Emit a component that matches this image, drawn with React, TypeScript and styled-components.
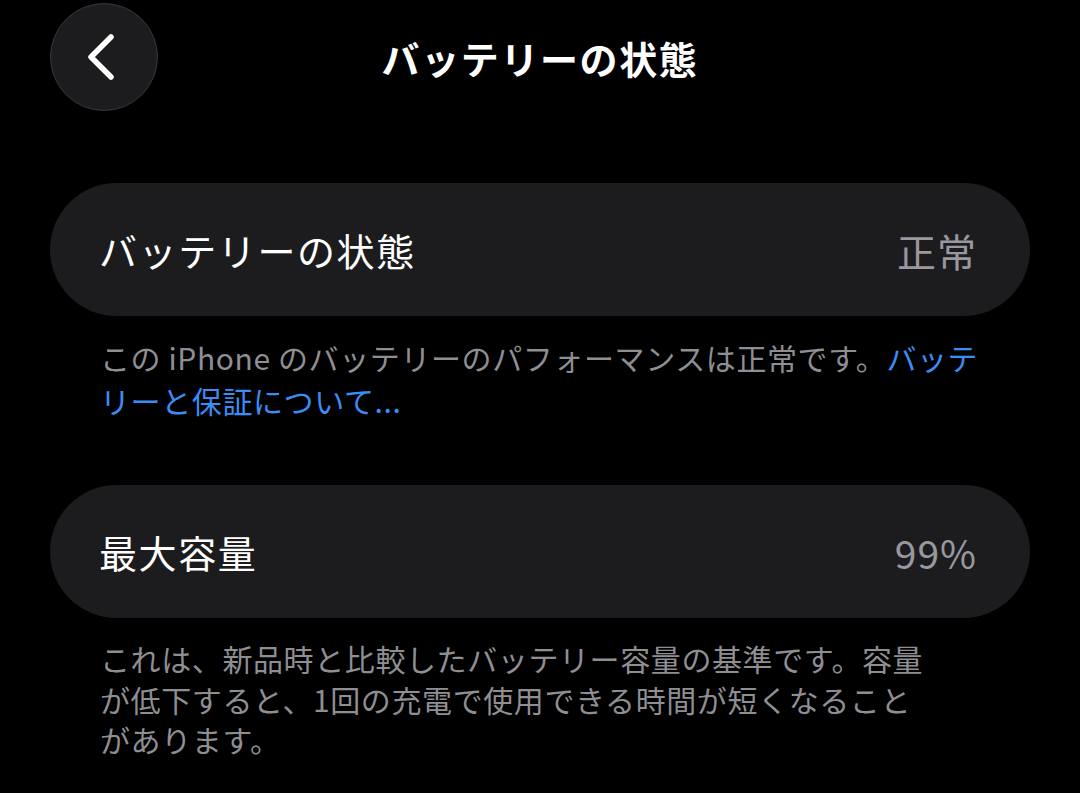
import React from 'react'
import styled, { createGlobalStyle } from 'styled-components'

const GlobalStyle = createGlobalStyle`
  html, body {
    margin: 0;
    padding: 0;
    background: #000;
  }
  body {
    font-family: 'Noto Sans CJK JP', 'Noto Sans', sans-serif;
    -webkit-font-smoothing: antialiased;
  }
`

const Page = styled.div`
  width: 1080px;
  height: 793px;
  background: #000;
  overflow: hidden;
  padding: 3px 50px 0;
  box-sizing: border-box;
`

const Header = styled.header`
  display: grid;
  grid-template-columns: 1fr auto 1fr;
  align-items: center;
  height: 108px;
`

const BackButton = styled.button`
  width: 108px;
  height: 108px;
  border-radius: 50%;
  background: #1c1c1e;
  border: 1.5px solid #38383a;
  display: flex;
  align-items: center;
  justify-content: center;
  padding: 0 6px 0 0;
  cursor: pointer;
`

const Title = styled.h1`
  margin: 0;
  color: #fff;
  font-size: 38px;
  font-weight: 700;
  letter-spacing: 1.6px;
`

const Content = styled.main`
  display: flex;
  flex-direction: column;
  margin-top: 72px;
`

const Section = styled.section<{ $gap?: number }>`
  display: flex;
  flex-direction: column;
  margin-bottom: ${(p) => p.$gap ?? 0}px;
`

const Card = styled.div`
  display: flex;
  align-items: center;
  justify-content: space-between;
  height: 133px;
  border-radius: 67px;
  background: #1c1c1e;
  padding: 0 53px 0 49px;
`

const Label = styled.span`
  color: #fff;
  font-size: 38px;
  font-weight: 400;
  letter-spacing: 1.6px;
`

const Value = styled.span`
  color: #98989e;
  font-size: 39px;
  font-weight: 400;
  letter-spacing: 1px;
`

const Footnote = styled.p<{ $lh: number }>`
  margin: 20px 0 0 50px;
  color: #8e8e93;
  font-size: 30px;
  line-height: ${(p) => p.$lh}px;
  letter-spacing: 0.6px;
`

const Link = styled.a`
  color: #3b8cf4;
  text-decoration: none;
`

function Chevron() {
  return (
    <svg width="34" height="48" viewBox="0 0 34 48" fill="none">
      <path
        d="M27 4 L7 24 L27 44"
        stroke="#fff"
        strokeWidth="5.5"
        strokeLinecap="round"
        strokeLinejoin="round"
      />
    </svg>
  )
}

export default function App() {
  return (
    <>
      <GlobalStyle />
      <Page>
        <Header>
          <div>
            <BackButton aria-label="戻る">
              <Chevron />
            </BackButton>
          </div>
          <Title>バッテリーの状態</Title>
          <div />
        </Header>
        <Content>
          <Section $gap={63}>
            <Card>
              <Label>バッテリーの状態</Label>
              <Value>正常</Value>
            </Card>
            <Footnote $lh={43}>
              この iPhone のバッテリーのパフォーマンスは正常です。<Link>バッテ<br />リーと保証について...</Link>
            </Footnote>
          </Section>
          <Section>
            <Card>
              <Label>最大容量</Label>
              <Value>99%</Value>
            </Card>
            <Footnote $lh={40.5}>
              これは、新品時と比較したバッテリー容量の基準です。容量<br />
              が低下すると、1回の充電で使用できる時間が短くなること<br />
              があります。
            </Footnote>
          </Section>
        </Content>
      </Page>
    </>
  )
}
